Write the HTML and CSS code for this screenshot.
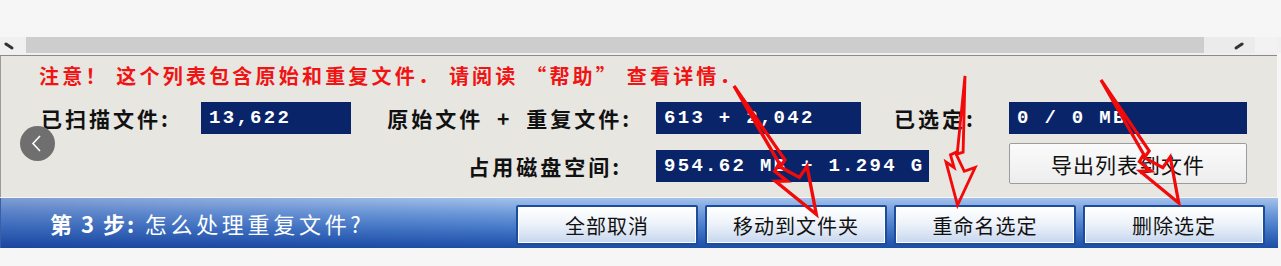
FILE: index.html
```html
<!DOCTYPE html>
<html lang="zh-CN">
<head>
<meta charset="utf-8">
<title>重复文件</title>
<link rel="stylesheet" href="styles.css">
</head>
<body>
<div class="frame">
  <div class="top"></div>
  <div class="scroll">
    <div class="sbtn left"><svg width="26" height="16" viewBox="0 0 26 16"><path d="M6 4 L12 8" stroke="#333" stroke-width="3" stroke-linecap="round"/></svg></div>
    <div class="track"></div>
    <div class="sbtn right"><svg width="51" height="16" viewBox="0 0 51 16"><path d="M32 8 L38 4" stroke="#333" stroke-width="3" stroke-linecap="round"/></svg></div>
    <div class="srest"></div>
  </div>
  <div class="sep"></div>
  <div class="panel">
    <div class="notice">注意！ 这个列表包含原始和重复文件． 请阅读 “帮助” 查看详情．</div>
    <div class="fields">
      <div class="label l1">已扫描文件:</div>
      <div class="box b1">13,622</div>
      <div class="label l2">原始文件 + 重复文件:</div>
      <div class="box b2">613 + 2,042</div>
      <div class="label l3">已选定:</div>
      <div class="box b3">0 / 0 MB</div>
      <div class="label l4">占用磁盘空间:</div>
      <div class="box b4">954.62 MB + 1.294 G</div>
      <button class="export">导出列表到文件</button>
    </div>
  </div>
  <div class="stepbar">
    <div class="title"><b>第 3 步:</b> 怎么处理重复文件?</div>
    <div class="actions">
      <button class="act">全部取消</button>
      <button class="act">移动到文件夹</button>
      <button class="act">重命名选定</button>
      <button class="act">删除选定</button>
    </div>
  </div>
  <div class="bottom"></div>

  <div class="prev"><svg width="35" height="35" viewBox="0 0 35 35"><path d="M20 10 L13 17.5 L20 25" fill="none" stroke="#fff" stroke-width="1.6"/></svg></div>

  <svg class="arrows" width="1281" height="266" viewBox="0 0 1281 266">
    <defs>
      <path id="bolt" d="M0,0 L5,80 L-2,83 L8,100 L19,95 L4,136 L-12,92 L-3,97 L-8,84 L-1,80 Z"/>
    </defs>
    <g transform="translate(734,86) rotate(-31) scale(1.12)"><use href="#bolt" class="arr"/></g>
    <g transform="translate(965,76) rotate(5) scale(0.95)"><use href="#bolt" class="arr"/></g>
    <g transform="translate(1101,80) rotate(-30.6) scale(1.07)"><use href="#bolt" class="arr"/></g>
  </svg>
</div>
</body>
</html>
```

FILE: styles.css
```css
* { box-sizing: border-box; }
body {
  margin: 0;
  background: #f6f6f6;
  font-family: "Noto Sans CJK SC", "Noto Sans", sans-serif;
}
.frame {
  position: relative;
  width: 1281px;
  height: 266px;
  overflow: hidden;
  background: #f6f6f6;
}
.top { height: 37px; }
.scroll {
  display: flex;
  height: 16px;
  background: #f0f0f0;
}
.sbtn.left { width: 26px; }
.track { width: 1178px; background: #cdcdcd; }
.sbtn.right { width: 51px; background: #ebebeb; }
.srest { width: 22px; background: #f2f2f2; }
.sep {
  width: 1277px;
  height: 3px;
  background: #f0f0f0;
  border-bottom: 1px solid #8a8a8a;
}
.panel {
  width: 1277px;
  height: 141px;
  background: #e7e6e1;
  padding: 8px 0 0 38px;
  border-left: 1px solid #9a9a9a;
}
.notice {
  color: #f01414;
  font-weight: 700;
  font-size: 20px;
  line-height: 24px;
  letter-spacing: 3.2px;
  white-space: nowrap;
}
.fields {
  margin-top: 14px;
  display: grid;
  grid-template-columns: 162px 150px 305px 225px 128px 238px;
  grid-template-rows: 32px 41px;
  row-gap: 9px;
}
.label {
  font-size: 21px;
  font-weight: 700;
  letter-spacing: 3px;
  color: #111;
  line-height: 32px;
  white-space: nowrap;
}
.l1 { grid-column: 1; grid-row: 1; padding-left: 2px; }
.l2 { grid-column: 3; grid-row: 1; text-align: right; padding-right: 24px; word-spacing: 6px; }
.l3 { grid-column: 5; grid-row: 1; padding-left: 13px; }
.l4 { grid-column: 1 / 4; grid-row: 2; text-align: right; padding-right: 34px; align-self: end; margin-bottom: 2px; }
.box {
  background: #0a246a;
  color: #fff;
  font-family: "Liberation Mono", "DejaVu Sans Mono", monospace;
  font-weight: 700;
  font-size: 19px;
  letter-spacing: 2.3px;
  line-height: 32px;
  height: 32px;
  padding-left: 8px;
  white-space: nowrap;
}
.b1 { grid-column: 2; grid-row: 1; }
.b2 { grid-column: 4; grid-row: 1; width: 205px; }
.b3 { grid-column: 6; grid-row: 1; }
.b4 { grid-column: 4 / 6; grid-row: 2; width: 273px; align-self: end; margin-bottom: 2px; }
.export {
  grid-column: 6;
  grid-row: 2;
  height: 41px;
  border: 1px solid #9c9c9c;
  border-radius: 2px;
  background: linear-gradient(#fbfbfb, #ededed);
  font-family: "Noto Sans CJK SC", sans-serif;
  font-size: 21px;
  letter-spacing: 1px;
  color: #111;
  padding: 0;
}
.stepbar {
  width: 1278px;
  height: 50px;
  margin-top: 1px;
  display: flex;
  align-items: center;
  background:
    linear-gradient(90deg, rgba(20,50,140,0.25), rgba(20,50,140,0) 40%),
    linear-gradient(#a3c1ea 0%, #6e9ada 30%, #3f73c4 65%, #1c4ca5 100%);
  border-left: 1px solid #3a5ea8;
}
.title {
  padding-left: 49px;
  color: #fff;
  font-size: 22px;
  letter-spacing: 3.7px;
  white-space: nowrap;
}
.title b { font-weight: 700; letter-spacing: 2px; }
.actions {
  margin-left: auto;
  margin-right: 13px;
  display: flex;
  gap: 7px;
}
.act {
  width: 182px;
  height: 40px;
  margin-top: 4px;
  border: 2px solid #1e4c9c;
  border-radius: 2px;
  background: linear-gradient(#ffffff 0%, #eef3fa 45%, #c6d6ee 100%);
  box-shadow: inset 0 0 0 1px #ffffff;
  font-family: "Noto Sans CJK SC", sans-serif;
  font-size: 20px;
  letter-spacing: 1px;
  color: #111;
  padding: 0;
}
.bottom {
  width: 1281px;
  height: 17px;
  background: #f6f6f6;
}
.prev {
  position: absolute;
  left: 20px;
  top: 126px;
  width: 35px;
  height: 35px;
  border-radius: 50%;
  background: #6f6f6f;
}
.prev svg { display: block; }
.arrows {
  position: absolute;
  left: 0;
  top: 0;
  pointer-events: none;
}
.arr {
  fill: none;
  stroke: #f20a0a;
  stroke-width: 3;
  stroke-linejoin: miter;
  vector-effect: non-scaling-stroke;
}
```
